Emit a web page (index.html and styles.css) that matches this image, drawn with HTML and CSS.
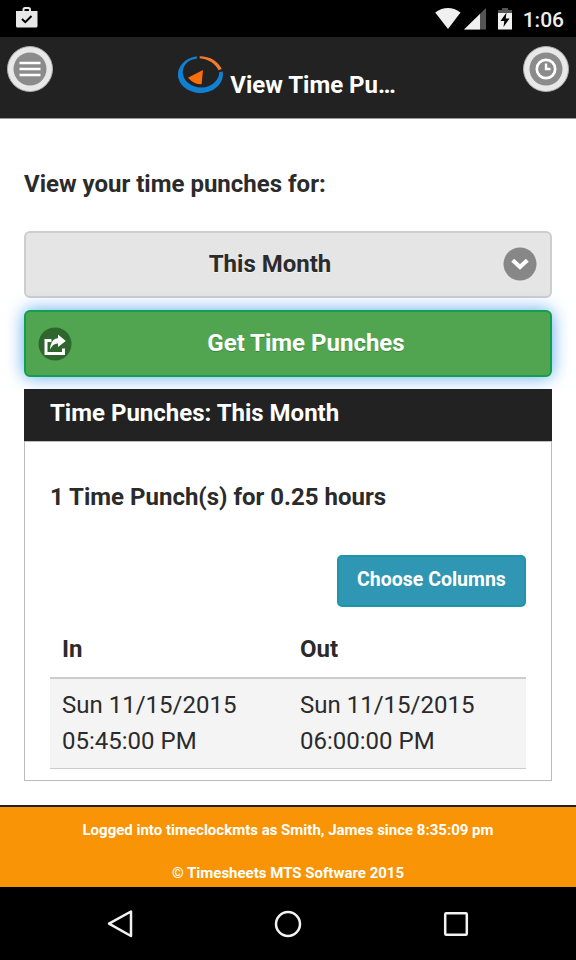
FILE: index.html
```html
<!DOCTYPE html>
<html lang="en">
<head>
    <meta charset="UTF-8">
    <meta name="viewport" content="width=device-width, initial-scale=1.0">
    <title>View Time Punches</title>
    <link rel="stylesheet" href="styles.css">
</head>
<body>
    <div class="status-bar">
        <svg class="store-icon" width="24" height="24" viewBox="0 0 24 24">
            <path fill="#e8e8e8" fill-rule="evenodd" d="M7.500 4V2.500Q7.500 0 10 0H13.500Q16 0 16 2.500V4H22.500V19Q22.500 20.500 21 20.500H2.500Q1 20.500 1 19V4ZM9.500 4H14V2.800Q14 2 13.200 2H10.300Q9.500 2 9.500 2.800Z"/>
            <path d="M7 12L10.300 15.200L16.500 9" fill="none" stroke="#000" stroke-width="2"/>
        </svg>
        <div class="status-right">
            <svg width="26" height="22" viewBox="0 0 26 22">
                <path d="M0.200 4.500Q13-4.300 25.500 4.500L13 21Z" fill="#f0f0f0"/>
            </svg>
            <svg class="signal" width="22" height="22" viewBox="0 0 22 22">
                <path d="M0 21.500L22 0V21.500Z" fill="#555"/>
                <path d="M0 21.500L16 5.900V21.500Z" fill="#f0f0f0"/>
            </svg>
            <svg class="battery" width="14" height="22" viewBox="0 0 14 22">
                <path d="M0 2H4V0H10V2H14V6H0Z" fill="#555"/>
                <path d="M0 5H14V21.500H0Z" fill="#f0f0f0"/>
                <path d="M8.500 4.500L2.500 13H6.300L5.500 19L11.500 10.500H7.700Z" fill="#000"/>
            </svg>
            <span class="time">1:06</span>
        </div>
    </div>

    <header>
        <a href="#" class="round-btn">
            <svg width="34" height="34" viewBox="0 0 34 34">
                <circle cx="17" cy="17" r="16.500" fill="#8b8b8b"/>
                <path d="M6.500 11H27.500M6.500 17H27.500M6.500 23H27.500" stroke="#fff" stroke-width="2.600"/>
            </svg>
        </a>
        <div class="title">
            <svg width="45" height="37" viewBox="0 0 45 37">
                <path d="M18.800 0.300A22.500 18.500 0 1 0 44.600 15.500L41.300 16A19 15.500 0 0 1 23.500 31.500A19 15 0 0 1 4.800 16.500C4.800 8.500 10.500 3.500 18.800 2.700Z" fill="#1080d0"/>
                <path d="M21.700 0.200C32 0.200 40.500 5.500 43.700 13L40.500 14.300C37.500 7.500 30.500 3.300 21.700 2.300Z" fill="#f47b30"/>
                <path d="M25 14L23.600 28.300Q16 28.500 10 21.700Z" fill="#fc6d0c"/>
            </svg>
            <h1>View Time Pu…</h1>
        </div>
        <a href="#" class="round-btn">
            <svg width="34" height="34" viewBox="0 0 34 34">
                <circle cx="17" cy="17" r="16.500" fill="#8b8b8b"/>
                <circle cx="17" cy="17" r="9.200" fill="none" stroke="#fff" stroke-width="2.700"/>
                <path d="M17 11.500V17H21.500" fill="none" stroke="#fff" stroke-width="2.400"/>
            </svg>
        </a>
    </header>

    <main>
        <p class="label">View your time punches for:</p>
        <div class="select">
            <span>This Month</span>
            <svg class="icon-right" width="34" height="34" viewBox="0 0 34 34">
                <circle cx="17" cy="17" r="16.500" fill="#878787"/>
                <path d="M9.700 13.200L17 20L24.300 13.200" fill="none" stroke="#fff" stroke-width="4.200"/>
            </svg>
        </div>
        <button class="submit">
            <svg class="icon-left" width="34" height="34" viewBox="0 0 34 34">
                <circle cx="17" cy="17" r="16.500" fill="#2f662d"/>
                <path d="M13.500 13.500H8V26.500H25.500V21.500" fill="none" stroke="#fff" stroke-width="3"/>
                <path d="M12 22.500C12.500 15 15.500 11.500 20 11.200V7.500L27.800 14L20 20V16.500C16.500 16.300 14 18.500 12 22.500Z" fill="#fff"/>
            </svg>
            <span>Get Time Punches</span>
        </button>

        <h2>Time Punches: This Month</h2>
        <div class="panel">
            <h3>1 Time Punch(s) for 0.25 hours</h3>
            <button class="columns-btn">Choose Columns</button>
            <table>
                <thead>
                    <tr>
                        <th>In</th>
                        <th>Out</th>
                    </tr>
                </thead>
                <tbody>
                    <tr>
                        <td>Sun 11/15/2015 05:45:00 PM</td>
                        <td>Sun 11/15/2015 06:00:00 PM</td>
                    </tr>
                </tbody>
            </table>
        </div>
    </main>

    <footer>
        <p>Logged into timeclockmts as Smith, James since 8:35:09 pm</p>
        <p>© Timesheets MTS Software 2015</p>
    </footer>

    <nav>
        <svg width="28" height="30" viewBox="0 0 28 30">
            <path d="M25 2.500V27L3 14.700Z" fill="none" stroke="#f2f2f2" stroke-width="2.500" stroke-linejoin="round"/>
        </svg>
        <svg width="28" height="28" viewBox="0 0 28 28">
            <circle cx="14" cy="14" r="12" fill="none" stroke="#f2f2f2" stroke-width="2.500"/>
        </svg>
        <svg width="28" height="28" viewBox="0 0 28 28">
            <rect x="3.200" y="3.200" width="21.600" height="21.600" rx="1" fill="none" stroke="#f2f2f2" stroke-width="2.500"/>
        </svg>
    </nav>
</body>
</html>
```
FILE: styles.css
```css
* {
    margin: 0;
    padding: 0;
    box-sizing: border-box;
}

body {
    width: 576px;
    height: 960px;
    display: flex;
    flex-direction: column;
    overflow: hidden;
    background-color: #fff;
    color: #2b2b2b;
    font-family: Roboto, sans-serif;
    font-size: 24px;
    line-height: 36px;
}

svg {
    display: block;
    flex-shrink: 0;
}

/* Android status bar */
.status-bar {
    height: 37px;
    padding: 7px 12px 0 15px;
    display: flex;
    justify-content: space-between;
    background-color: #000;
}

.status-right {
    display: flex;
    padding-top: 1px;
}

.signal {
    margin-left: 3px;
}

.battery {
    margin-left: 12px;
}

.time {
    margin-left: 11px;
    color: #eee;
    font-size: 21px;
    font-weight: 500;
    line-height: 24px;
}

/* Page header */
header {
    height: 82px;
    padding: 9px 7px 0;
    display: flex;
    justify-content: space-between;
    background-color: #222;
    border-bottom: 1px solid #999;
}

.round-btn {
    width: 46px;
    height: 46px;
    display: flex;
    align-items: center;
    justify-content: center;
    background-color: #e8e8e8;
    border: 1px solid #aaa;
    border-radius: 50%;
}

.title {
    display: flex;
    gap: 7px;
    padding: 10px 2px 0 0;
    color: #fff;
}

h1 {
    padding-top: 11px;
    font-size: 24px;
    font-weight: 700;
}

h2,
h3,
th {
    font-size: 24px;
    font-weight: 700;
}

/* Content */
main {
    height: 686px;
    padding: 47px 24px 0;
}

.label {
    margin-bottom: 29px;
    font-weight: 700;
}

.select,
.submit {
    position: relative;
    width: 100%;
    height: 67px;
    display: flex;
    align-items: center;
    justify-content: center;
    border-radius: 6px;
    font: inherit;
    font-weight: 700;
}

.select {
    margin-bottom: 12px;
    padding: 0 36px 2px 0;
    background-color: #e5e5e5;
    border: 2px solid #cdcdcd;
    text-shadow: 0 1px 0 #f3f3f3;
}

.submit {
    margin-bottom: 12px;
    padding: 0 0 2px 36px;
    background-color: #51a551;
    border: 2px solid #10a050;
    color: #fff;
    box-shadow: 0 0 18px #5da8ed;
    text-shadow: 0 1px 0 #3c8a3c;
}

.icon-left,
.icon-right {
    position: absolute;
}

.icon-left {
    top: 15px;
    left: 12px;
}

.icon-right {
    top: 14px;
    right: 13px;
}

h2 {
    position: relative;
    height: 52px;
    padding: 6px 26px;
    background-color: #222;
    color: #fff;
}

.panel {
    height: 340px;
    padding: 37px 25px 0;
    border: 1px solid #bbb;
}

.columns-btn {
    display: block;
    width: 189px;
    height: 52px;
    margin: 40px 0 18px auto;
    padding-bottom: 3px;
    background-color: #2f96b4;
    border: 2px solid #1c96a8;
    border-radius: 5px;
    color: #fff;
    font-family: inherit;
    font-size: 19.5px;
    font-weight: 700;
}

table {
    width: 100%;
    table-layout: fixed;
    border-collapse: collapse;
}

th,
td {
    padding: 8px 40px 10px 12px;
    text-align: left;
}

th {
    padding-top: 6px;
    padding-bottom: 10px;
    border-bottom: 2px solid #ccc;
}

td {
    padding-bottom: 9px;
    background-color: #f4f4f4;
    border-bottom: 1px solid #ccc;
}

footer {
    height: 82px;
    padding-top: 12px;
    background-color: #f89406;
    border-top: 2px solid #222;
    color: #fff;
    font-size: 15px;
    font-weight: 700;
    line-height: 22px;
    text-align: center;
}

footer p + p {
    margin-top: 21px;
}

/* Android navigation bar */
nav {
    height: 73px;
    display: flex;
    align-items: center;
    justify-content: center;
    gap: 140px;
    background-color: #000;
}
```
